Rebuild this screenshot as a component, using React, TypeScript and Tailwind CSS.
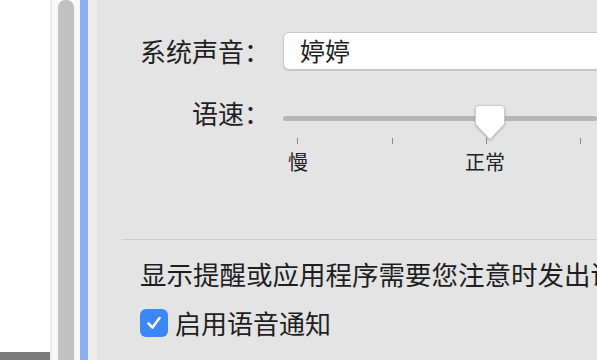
import React from "react";

const font = {
  fontFamily: '"Noto Sans CJK SC", "Noto Sans", sans-serif',
};

function SliderThumb() {
  return (
    <svg width="32" height="38" viewBox="0 0 32 38" className="drop-shadow-[0_1px_1px_rgba(0,0,0,0.25)]">
      <path
        d="M5 1.5 H27 Q30.5 1.5 30.5 5 V20 L16 35.5 L1.5 20 V5 Q1.5 1.5 5 1.5 Z"
        fill="#ffffff"
        stroke="#c4c4c4"
        strokeWidth="0.8"
      />
    </svg>
  );
}

function SpeedSlider() {
  const ticks = [14, 109, 203, 297];

  return (
    <div className="relative h-[72px] w-[360px]">
      <div className="absolute left-0 right-0 top-[12px] h-[5px] rounded-full bg-[#b6b6b6]" />
      {ticks.map((x) => (
        <div
          key={x}
          className="absolute top-[34px] h-[6px] w-px bg-[#8a8a8a]"
          style={{ left: x }}
        />
      ))}
      <div className="absolute left-[191px] top-[0px]">
        <SliderThumb />
      </div>
      <span className="absolute left-[5px] top-[46px] text-[20px] leading-[24px] text-[#222]">
        慢
      </span>
      <span className="absolute left-[182px] top-[46px] text-[20px] leading-[24px] text-[#222]">
        正常
      </span>
    </div>
  );
}

export default function App() {
  return (
    <div className="flex h-[360px] w-[597px] overflow-hidden" style={font}>
      <div className="flex w-[50px] flex-col justify-end bg-white">
        <div className="h-[8px] bg-[#7b7b7b]" />
      </div>
      <div className="w-[8px] border-l-2 border-[#ececec] bg-[#f8f8f8]" />
      <div className="w-[16px] rounded-t-[7px] bg-[#c1c1c1]" />
      <div className="w-[6px] bg-[#f7f7f7]" />
      <div className="w-[8px] bg-[#8aaef0]" />
      <div className="w-[9px] bg-[#eeece8]" />

      <main className="flex-1 overflow-hidden bg-[#e4e4e4] pl-[25px] pt-[32px] text-[#1f1f1f]">
        <div className="flex items-center gap-[13px]">
          <span className="w-[148px] shrink-0 text-right text-[26px] leading-[38px]">
            系统声音：
          </span>
          <div className="flex h-[38px] w-[360px] shrink-0 items-center rounded-[6px] border border-[#c9c9c9] bg-white pl-[16px] text-[25px] shadow-[0_1px_1px_rgba(0,0,0,0.15)]">
            婷婷
          </div>
        </div>

        <div className="mt-[34px] flex items-start gap-[13px]">
          <span className="-mt-[6px] w-[148px] shrink-0 text-right text-[26px] leading-[30px]">
            语速：
          </span>
          <SpeedSlider />
        </div>

        <div className="mt-[63px] h-px w-[500px] bg-[#cdcdcd]" />

        <div className="pl-[18px]">
          <p className="mt-[19px] whitespace-nowrap text-[26.5px] leading-[30px]">
            显示提醒或应用程序需要您注意时发出语音
          </p>
          <label className="mt-[19px] flex items-center gap-[7px]">
            <span className="flex h-[28px] w-[28px] items-center justify-center rounded-[6px] bg-[#3b87f6]">
              <svg width="18" height="18" viewBox="0 0 18 18">
                <path
                  d="M3.5 9.5 L7.5 13.5 L14.5 4"
                  fill="none"
                  stroke="#ffffff"
                  strokeWidth="2.6"
                  strokeLinecap="round"
                  strokeLinejoin="round"
                />
              </svg>
            </span>
            <span className="text-[26px] leading-[30px]">启用语音通知</span>
          </label>
        </div>
      </main>
    </div>
  );
}
